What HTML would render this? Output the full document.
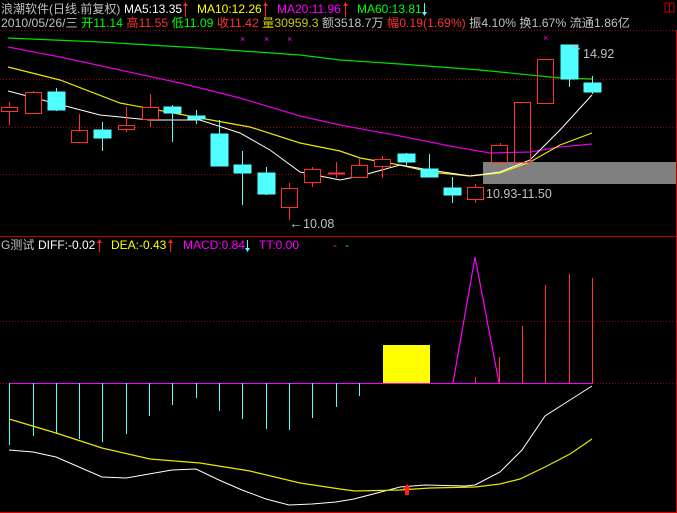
<!DOCTYPE html>
<html><head><meta charset="utf-8"><style>
html,body{margin:0;padding:0;background:#000;}
svg{display:block;}
text{font-family:"Liberation Sans","Noto Sans CJK SC",sans-serif;font-size:12px;}
</style></head><body>
<svg width="677" height="513" viewBox="0 0 677 513" xmlns="http://www.w3.org/2000/svg">
<rect width="677" height="513" fill="#000"/>
<g stroke="#a00000" stroke-width="1" stroke-dasharray="1,2">
<line x1="0" y1="30.5" x2="676" y2="30.5"/>
<line x1="0" y1="79.5" x2="676" y2="79.5"/>
<line x1="0" y1="127.5" x2="676" y2="127.5"/>
<line x1="0" y1="174.5" x2="676" y2="174.5"/>
<line x1="0" y1="321.5" x2="676" y2="321.5"/>
<line x1="0" y1="383.5" x2="676" y2="383.5"/>
</g>
<line x1="0" y1="236.5" x2="677" y2="236.5" stroke="#c00000"/>
<line x1="676.5" y1="30" x2="676.5" y2="513" stroke="#c00000"/>
<line x1="0" y1="512.5" x2="677" y2="512.5" stroke="#e00000"/>
<rect x="665" y="3" width="9" height="9" fill="none" stroke="#c00000"/>
<line x1="669.5" y1="3" x2="669.5" y2="12" stroke="#c00000"/>

<rect x="483" y="162" width="193" height="22" fill="#808080"/>

<polyline fill="none" stroke="#00e000" stroke-width="1.2" points="8,38 100,42 200,48 300,55 340,60 400,64 480,70 560,78 592,79"/>
<polyline fill="none" stroke="#e000e0" stroke-width="1.2" points="8,47 60,57 120,70 180,83 240,98 300,116 340,125 400,136 450,146 490,153 530,152 560,147 592,144"/>
<polyline fill="none" stroke="#e8e800" stroke-width="1.2" points="8,67 60,80 120,103 200,118 250,127 300,143 340,151 360,158 400,165 430,172 470,176 500,173 530,162 560,145 592,133"/>
<polyline fill="none" stroke="#fff" stroke-width="1" points="8,91 50,102 100,115 150,120 200,120 240,133 270,150 300,172 340,180 360,176 400,165 430,170 470,176 500,172 530,160 560,130 592,95"/>

<g stroke-width="1">
<g stroke="#ff3030" fill="none">
<line x1="9.5" y1="102" x2="9.5" y2="125"/><rect x="1.5" y="107.5" width="16" height="4" fill="#000"/>
<line x1="33.5" y1="91" x2="33.5" y2="92"/><rect x="25.5" y="92.5" width="16" height="21" fill="#000"/>
<line x1="79.5" y1="114" x2="79.5" y2="130"/><rect x="71.5" y="130.5" width="16" height="12" fill="#000"/>
<line x1="126.5" y1="107" x2="126.5" y2="132"/><rect x="118.5" y="125.5" width="16" height="4" fill="#000"/>
<line x1="150.5" y1="94" x2="150.5" y2="127"/><rect x="142.5" y="107.5" width="16" height="12" fill="#000"/>
<line x1="289.5" y1="183" x2="289.5" y2="220"/><rect x="281.5" y="188.5" width="16" height="19" fill="#000"/>
<line x1="312.5" y1="167" x2="312.5" y2="187"/><rect x="304.5" y="169.5" width="16" height="13" fill="#000"/>
<line x1="336.5" y1="162" x2="336.5" y2="178"/><line x1="328" y1="173.5" x2="345" y2="173.5" stroke-width="2"/>
<line x1="359.5" y1="159" x2="359.5" y2="165"/><rect x="351.5" y="165.5" width="16" height="12" fill="#000"/>
<line x1="382.5" y1="156" x2="382.5" y2="178"/><rect x="374.5" y="159.5" width="16" height="7" fill="#000"/>
<line x1="475.5" y1="184" x2="475.5" y2="203"/><rect x="467.5" y="187.5" width="16" height="12" fill="#000"/>
<line x1="500.5" y1="143" x2="500.5" y2="145"/><rect x="491.5" y="145.5" width="16" height="17" fill="none"/>
<rect x="514.5" y="102.5" width="16" height="60" fill="none"/>
<rect x="537.5" y="59.5" width="16" height="44" fill="none"/>
</g>
<g stroke="#50ffff" fill="#50ffff">
<line x1="56.5" y1="88" x2="56.5" y2="111"/><rect x="48" y="92" width="17" height="18"/>
<line x1="102.5" y1="122" x2="102.5" y2="151"/><rect x="94" y="130" width="17" height="8"/>
<line x1="172.5" y1="105" x2="172.5" y2="142"/><rect x="164" y="107" width="17" height="6"/>
<line x1="196.5" y1="110" x2="196.5" y2="124"/><rect x="188" y="116" width="17" height="3"/>
<line x1="219.5" y1="120" x2="219.5" y2="134"/><rect x="211" y="134" width="17" height="32"/>
<line x1="242.5" y1="151" x2="242.5" y2="205"/><rect x="234" y="165" width="17" height="8"/>
<line x1="266.5" y1="167" x2="266.5" y2="195"/><rect x="258" y="173" width="17" height="21"/>
<line x1="406.5" y1="153" x2="406.5" y2="167"/><rect x="398" y="154" width="17" height="8"/>
<line x1="429.5" y1="154" x2="429.5" y2="177"/><rect x="421" y="169" width="17" height="8"/>
<line x1="452.5" y1="177" x2="452.5" y2="203"/><rect x="444" y="188" width="17" height="7"/>
<line x1="569.5" y1="45" x2="569.5" y2="87"/><rect x="561" y="45" width="17" height="34"/>
<line x1="592.5" y1="76" x2="592.5" y2="94"/><rect x="584" y="83" width="17" height="9"/>
</g>
</g>
<g fill="#ff00ff"><text x="240" y="42" style="font-size:9px">×</text><text x="264" y="42" style="font-size:9px">×</text><text x="287" y="42" style="font-size:9px">×</text><text x="543" y="41" style="font-size:9px">×</text></g>

<text x="486" y="198" fill="#c0c0c0" style="font-size:12.5px">10.93-11.50</text>
<text x="583" y="58" fill="#c0c0c0" style="font-size:12.5px">14.92</text>
<line x1="571" y1="46" x2="580" y2="49" stroke="#c0c0c0"/>
<text x="289" y="228" fill="#c0c0c0" style="font-size:12.5px"><tspan style="font-size:14px">←</tspan>10.08</text>

<line x1="9" y1="383.5" x2="593" y2="383.5" stroke="#ff00ff"/>
<g stroke="#50ffff" stroke-width="1">
<line x1="9.5" y1="383" x2="9.5" y2="445"/><line x1="33.5" y1="383" x2="33.5" y2="436"/>
<line x1="56.5" y1="383" x2="56.5" y2="434"/><line x1="79.5" y1="383" x2="79.5" y2="439"/>
<line x1="102.5" y1="383" x2="102.5" y2="442"/><line x1="126.5" y1="383" x2="126.5" y2="434"/>
<line x1="149.5" y1="383" x2="149.5" y2="416"/><line x1="172.5" y1="383" x2="172.5" y2="405"/>
<line x1="196.5" y1="383" x2="196.5" y2="398"/><line x1="219.5" y1="383" x2="219.5" y2="411"/>
<line x1="242.5" y1="383" x2="242.5" y2="419"/><line x1="266.5" y1="383" x2="266.5" y2="429"/>
<line x1="289.5" y1="383" x2="289.5" y2="430"/><line x1="312.5" y1="383" x2="312.5" y2="418"/>
<line x1="336.5" y1="383" x2="336.5" y2="407"/><line x1="359.5" y1="383" x2="359.5" y2="396"/>
</g>
<rect x="383" y="345" width="47" height="38" fill="#ffff00"/>
<polyline fill="none" stroke="#ff00ff" stroke-width="1.2" points="453,383 475,257 499,383"/>
<g stroke="#ff3030" stroke-width="1">
<line x1="475.5" y1="377" x2="475.5" y2="383"/><line x1="499.5" y1="357" x2="499.5" y2="383"/>
<line x1="522.5" y1="326" x2="522.5" y2="383"/><line x1="545.5" y1="285" x2="545.5" y2="383"/>
<line x1="569.5" y1="274" x2="569.5" y2="383"/><line x1="592.5" y1="278" x2="592.5" y2="383"/>
</g>
<polyline fill="none" stroke="#fff" stroke-width="1" points="9,450 33,452 56,457 79,467 102,477 126,478 149,474 172,470 196,469 219,480 242,490 266,499 289,505 312,504 336,502 354,499 400,487 425,485 465,486 475,485 500,472 522,450 545,416 570,400 592,386"/>
<polyline fill="none" stroke="#e8e800" stroke-width="1.2" points="9,419 56,433 102,448 150,459 200,463 250,471 300,483 340,489 355,491 400,490 430,488 475,487 500,484 520,479 545,467 570,454 592,439"/>
<path d="M407,484 L411,489 L409,489 L409,495 L405,495 L405,489 L403,489 Z" fill="#ff2020"/>

<text x="1" y="13"><tspan fill="#c0c0c0">浪潮软件(日线.前复权)</tspan><tspan x="124" fill="#fff">MA5:13.35</tspan><tspan x="197" fill="#ffff00">MA10:12.26</tspan><tspan x="277" fill="#ff00ff">MA20:11.96</tspan><tspan x="357" fill="#00ff00">MA60:13.81</tspan></text>
<g stroke-width="1">
<line x1="185.5" y1="3" x2="185.5" y2="17" stroke="#ff2020"/><path d="M183,6 L185.5,2 L188,6" fill="#ff2020"/>
<line x1="265.5" y1="3" x2="265.5" y2="17" stroke="#ff2020"/><path d="M263,6 L265.5,2 L268,6" fill="#ff2020"/>
<line x1="345.5" y1="3" x2="345.5" y2="17" stroke="#ff2020"/><path d="M343,6 L345.5,2 L348,6" fill="#ff2020"/>
<line x1="424.5" y1="3" x2="424.5" y2="15" stroke="#50ffff"/><path d="M422,12 L424.5,16 L427,12" fill="#50ffff"/>
</g>
<text x="1" y="27" textLength="629" lengthAdjust="spacingAndGlyphs"><tspan fill="#c0c0c0">2010/05/26/三 </tspan><tspan fill="#00ff00">开11.14 </tspan><tspan fill="#ff3030">高11.55 </tspan><tspan fill="#00ff00">低11.09 </tspan><tspan fill="#ff3030">收11.42 </tspan><tspan fill="#cccc00">量30959.3 </tspan><tspan fill="#c0c0c0">额3518.7万 </tspan><tspan fill="#ff3030">幅0.19(1.69%) </tspan><tspan fill="#c0c0c0">振4.10% 换1.67% 流通1.86亿</tspan></text>

<text x="1" y="249"><tspan fill="#c0c0c0">G测试 </tspan><tspan x="38" fill="#fff">DIFF:-0.02</tspan><tspan x="111" fill="#ffff00">DEA:-0.43</tspan><tspan x="183" fill="#ff00ff">MACD:0.84</tspan><tspan x="259" fill="#ff00ff">TT:0.00</tspan><tspan x="333" fill="#ff3030">-</tspan><tspan x="345" fill="#00ff00">-</tspan></text>
<line x1="99.5" y1="240" x2="99.5" y2="252" stroke="#ff2020"/><path d="M97,243 L99.5,239 L102,243" fill="#ff2020"/>
<line x1="170.5" y1="240" x2="170.5" y2="252" stroke="#ff2020"/><path d="M168,243 L170.5,239 L173,243" fill="#ff2020"/>
<line x1="247.5" y1="240" x2="247.5" y2="251" stroke="#50ffff"/><path d="M245,248 L247.5,252 L250,248" fill="#50ffff"/>
</svg>
</body></html>
